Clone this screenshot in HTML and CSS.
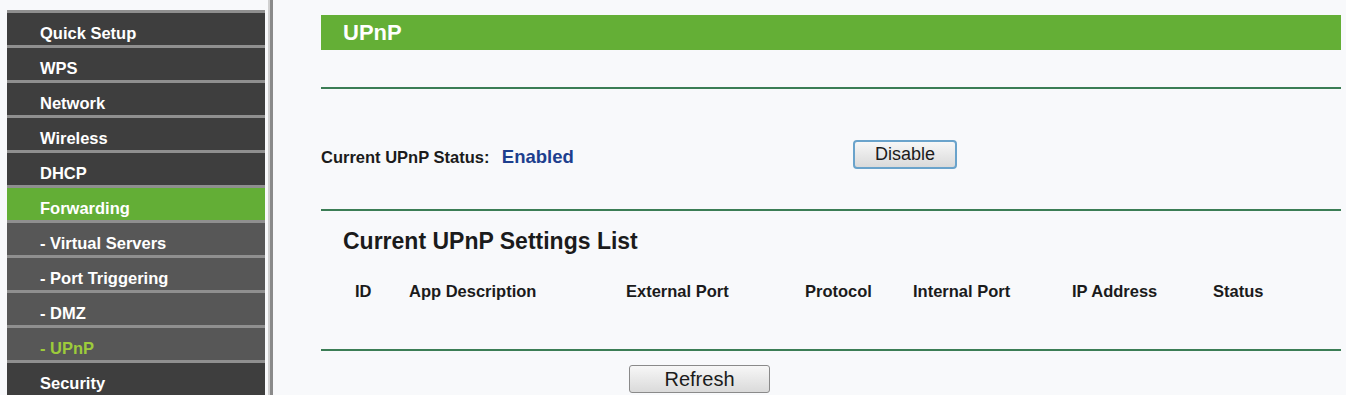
FILE: index.html
```html
<!DOCTYPE html>
<html lang="en">

<head>
  <title>UPnP</title>
  <meta charset="utf-8">
  <link rel="stylesheet" href="styles.css">
</head>

<body>
  <!-- Menu -->
  <div class="menu">
    <a class="item" href="#">Quick Setup</a>
    <a class="item" href="#">WPS</a>
    <a class="item" href="#">Network</a>
    <a class="item" href="#">Wireless</a>
    <a class="item" href="#">DHCP</a>
    <a class="item active" href="#">Forwarding</a>
    <a class="item sub" href="#">- Virtual Servers</a>
    <a class="item sub" href="#">- Port Triggering</a>
    <a class="item sub" href="#">- DMZ</a>
    <a class="item sub current" href="#">- UPnP</a>
    <a class="item" href="#">Security</a>
  </div>
  <div class="divider"></div>

  <!-- Main -->
  <div class="main">
    <div class="title_bar">UPnP</div>
    <div class="line first"></div>

    <div class="status_row">
      <div class="status_cell">
        <span class="label">Current UPnP Status:</span>
        <span class="enabled">Enabled</span>
      </div>
      <button class="btn btn_disable">Disable</button>
    </div>

    <div class="line"></div>

    <h2 class="list_title">Current UPnP Settings List</h2>
    <div class="list_head">
      <span>ID</span>
      <span>App Description</span>
      <span>External Port</span>
      <span>Protocol</span>
      <span>Internal Port</span>
      <span>IP Address</span>
      <span>Status</span>
    </div>

    <div class="line last"></div>
    <button class="btn btn_refresh">Refresh</button>
  </div>
</body>

</html>
```

FILE: styles.css
```css
* {
  box-sizing: border-box;
}

body {
  margin: 0;
  display: flex;
  background-color: #f8f9fb;
  font-family: "Liberation Sans", Arial, sans-serif;
  color: #1b1b1b;
  height: 395px;
  overflow: hidden;
}

/* Left menu */
.menu {
  width: 258px;
  margin-left: 7px;
  margin-top: 10px;
  flex-shrink: 0;
}

.menu .item {
  display: block;
  height: 35px;
  border-top: 3px solid #8f8f8f;
  padding: 10px 0 0 33px;
  line-height: 20px;
  font-size: 16.5px;
  font-weight: bold;
  color: #ffffff;
  text-decoration: none;
  background-color: #3e3e3e;
  white-space: nowrap;
}

.menu .item.sub {
  background-color: #575757;
}

.menu .item.active {
  background-color: #63ae36;
}

.menu .item.current {
  color: #9dcb3b;
}

.divider {
  width: 5px;
  margin-left: 3px;
  border-left: 2px solid #d0d0d0;
  background-color: #8a8a8a;
  flex-shrink: 0;
}

/* Main area */
.main {
  flex: 1;
  padding: 15px 5px 0 48px;
}

.title_bar {
  height: 35px;
  line-height: 35px;
  padding-left: 22px;
  background-color: #64af36;
  color: #ffffff;
  font-size: 22px;
  font-weight: bold;
}

.line {
  border-top: 2px solid #3b7d55;
}

.line.first {
  margin-top: 37px;
}

.status_row {
  display: flex;
  align-items: center;
  height: 120px;
  padding-top: 32px;
  padding-bottom: 21px;
}

.status_cell {
  width: 532px;
  padding-top: 4px;
}

.label {
  font-size: 16.5px;
  font-weight: bold;
}

.enabled {
  margin-left: 8px;
  font-size: 18.5px;
  font-weight: bold;
  color: #1d3f8e;
}

.btn {
  font-family: "Liberation Sans", Arial, sans-serif;
  color: #1b1b1b;
  background: linear-gradient(#f7f7f7, #dadada);
  cursor: pointer;
  padding: 0;
}

.btn_disable {
  width: 104px;
  height: 29px;
  font-size: 18px;
  border: 2px solid #6aa3cb;
  border-radius: 4px;
}

.list_title {
  margin: 16px 0 0 22px;
  font-size: 23px;
  line-height: 28px;
  font-weight: bold;
}

.list_head {
  display: grid;
  grid-template-columns: 54px 217px 179px 108px 159px 141px 1fr;
  margin: 26px 0 0 34px;
  font-size: 16.5px;
  font-weight: bold;
  line-height: 20px;
}

.line.last {
  margin-top: 48px;
}

.btn_refresh {
  display: block;
  width: 141px;
  height: 28px;
  margin: 14px 0 0 308px;
  font-size: 20px;
  border: 1px solid #8a8a8a;
  border-radius: 3px;
}
```
